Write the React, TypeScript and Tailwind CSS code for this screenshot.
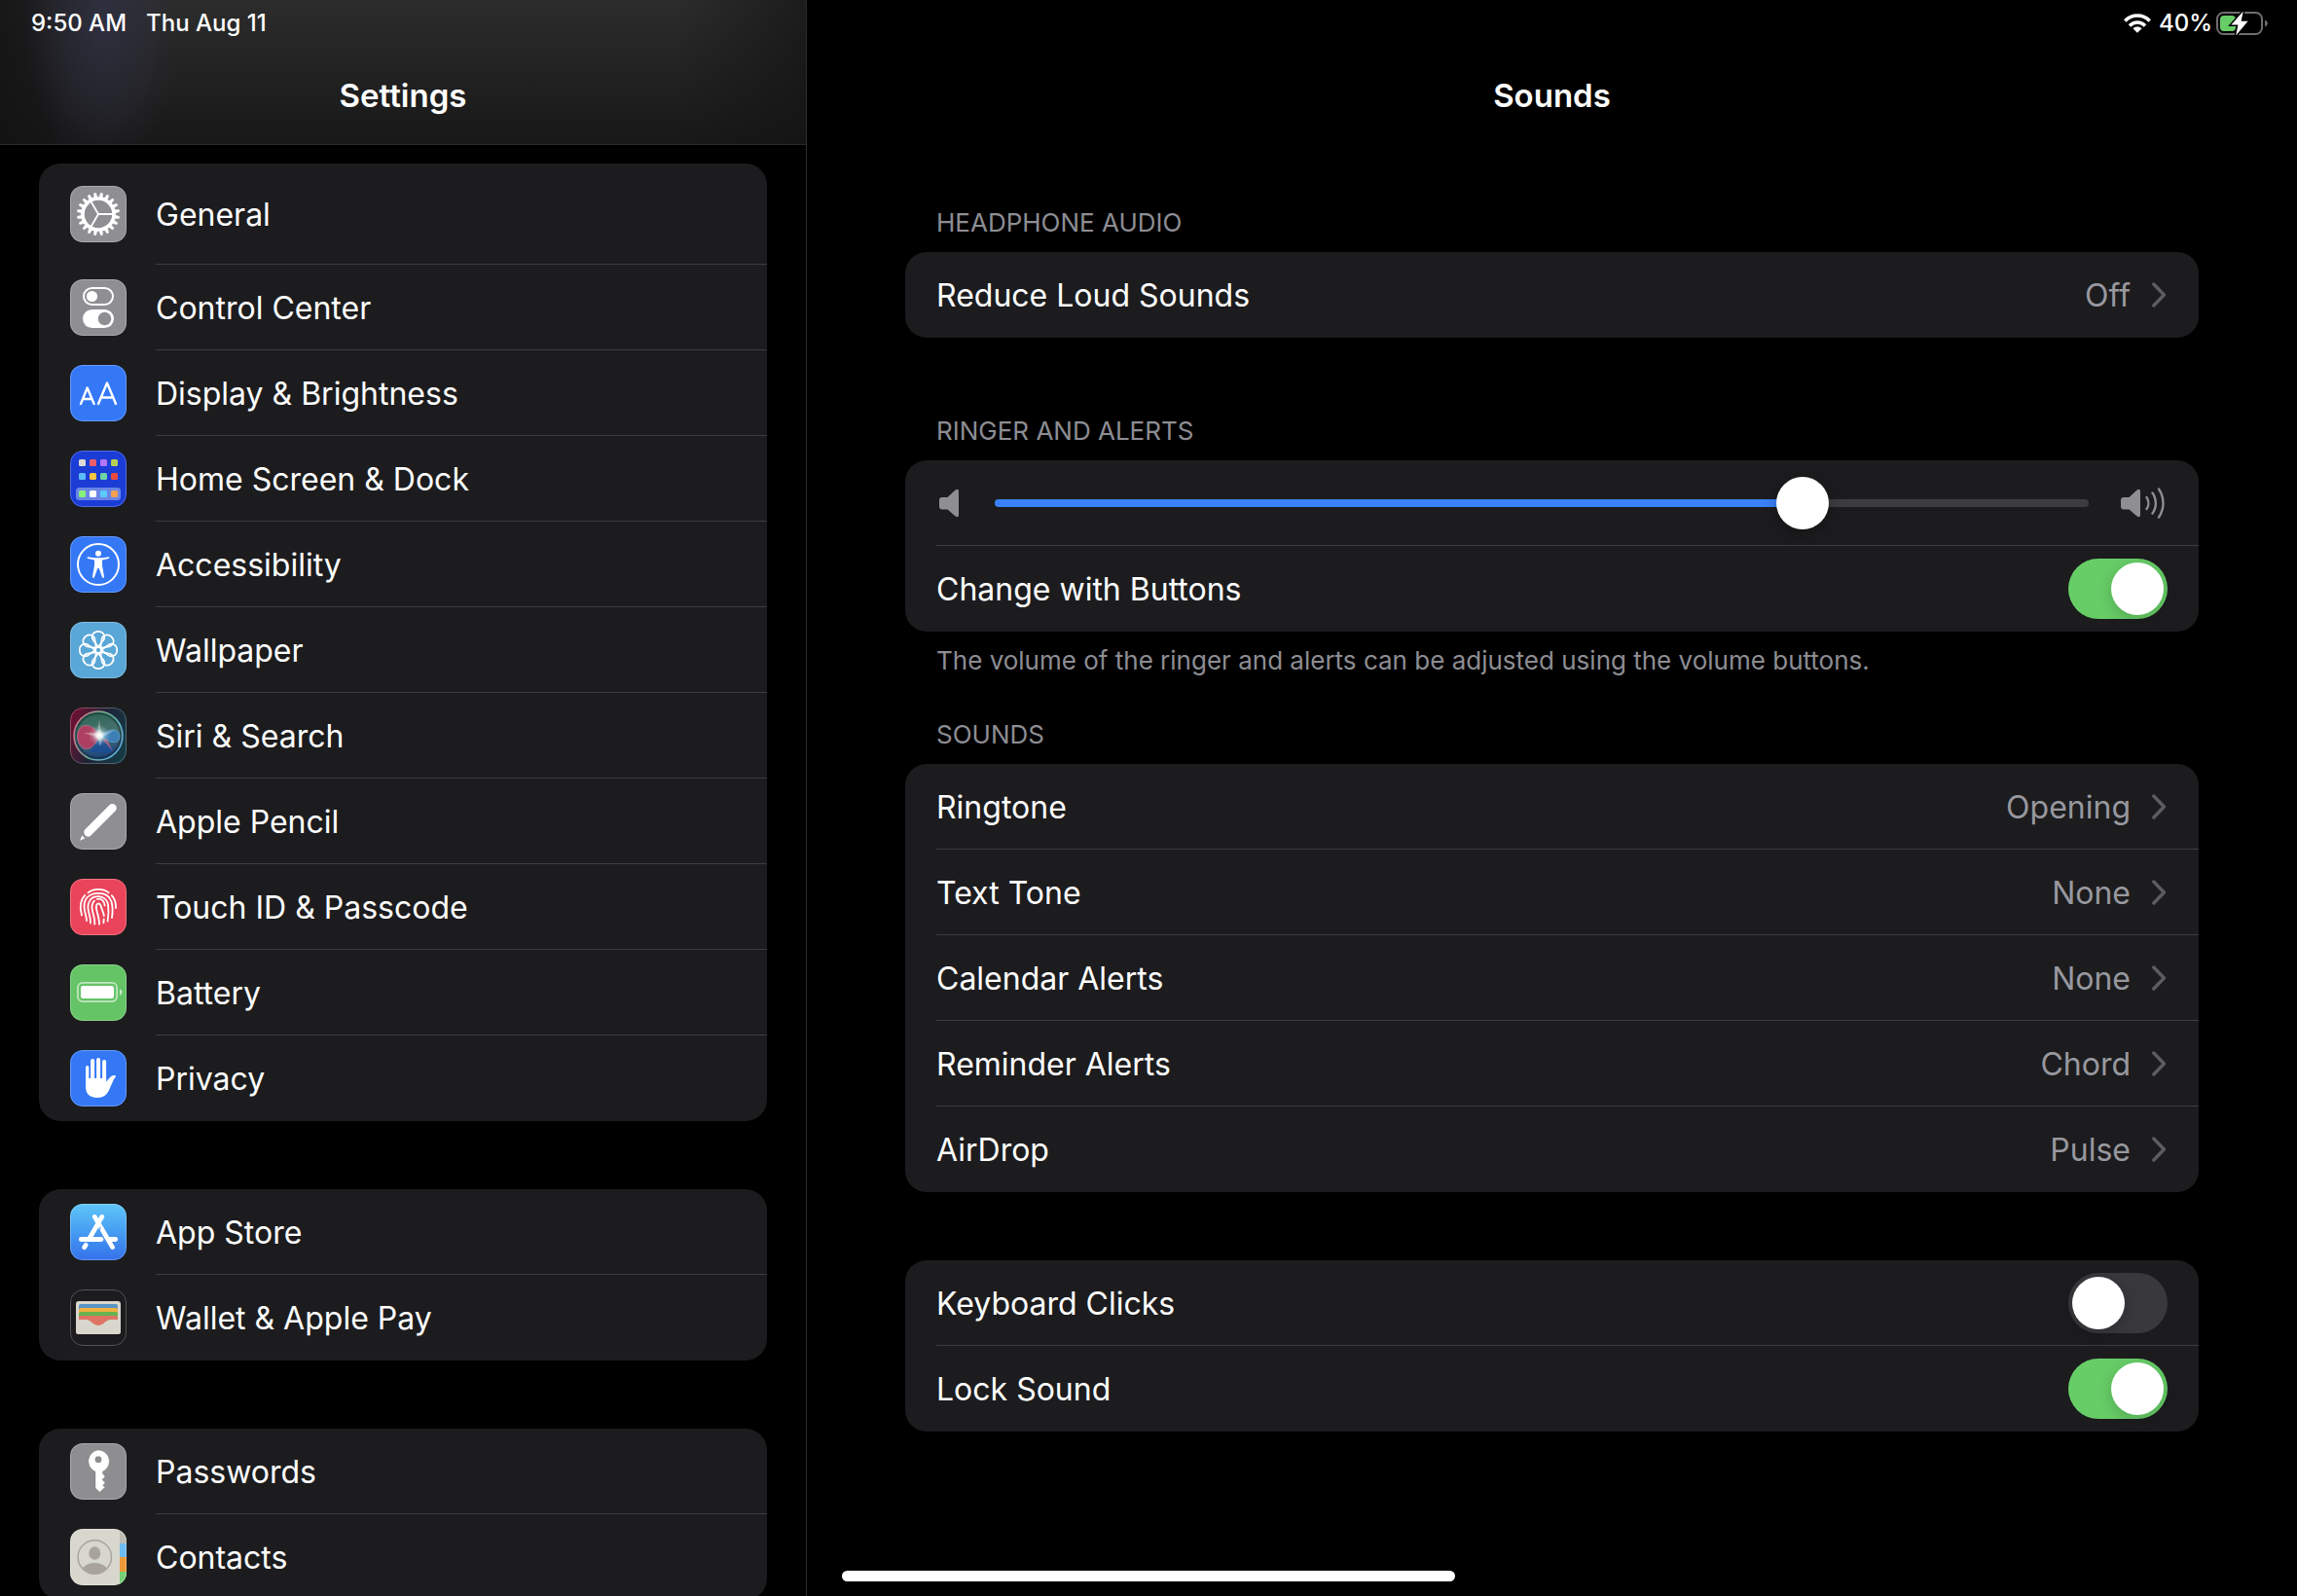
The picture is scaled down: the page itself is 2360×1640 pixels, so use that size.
import React, { useState } from "react";

type IconProps = { children: React.ReactNode; className: string };

// Rounded app tile, every glyph is drawn on a 58x58 grid
const Tile: React.FC<IconProps> = ({ children, className }) => (
  <span
    className={`relative block size-[58px] shrink-0 overflow-hidden rounded-[13px] ${className}`}
  >
    <svg viewBox="0 0 58 58" className="block size-full" aria-hidden="true">
      {children}
      <rect
        x="0.5"
        y="0.5"
        width="57"
        height="57"
        rx="12.5"
        fill="none"
        stroke="#fff"
        strokeOpacity="0.25"
      />
    </svg>
  </span>
);

const GeneralIcon = () => (
  <Tile className="bg-[#8e8e93]">
    <g stroke="#fff" fill="none">
      <circle cx="29" cy="29" r="16" strokeWidth="3.6" />
      <path d="M29 29H45M29 29L21 15.2M29 29L21 42.8" strokeWidth="1.8" />
    </g>
    {Array.from({ length: 20 }, (_, i) => (
      <path
        key={i}
        d="M27 13L28 7.2H30L31 13Z"
        fill="#fff"
        stroke="#fff"
        strokeWidth="0.4"
        transform={`rotate(${i * 18 + 9} 29 29)`}
      />
    ))}
  </Tile>
);

const ControlCenterIcon = () => (
  <Tile className="bg-[#8e8e93]">
    <rect x="14" y="9" width="30" height="17" rx="8.5" fill="none" stroke="#fff" strokeWidth="2" />
    <circle cx="22.5" cy="17.5" r="5.6" fill="#fff" />
    <rect x="13" y="31" width="32" height="19" rx="9.5" fill="#fff" />
    <circle cx="35.5" cy="40.5" r="6.8" fill="#8e8e93" />
  </Tile>
);

const DisplayIcon = () => (
  <Tile className="bg-[#3478f6]">
    <g fill="none" stroke="#fff" strokeWidth="2.4" strokeLinecap="round" strokeLinejoin="round">
      <path d="M11 40L17.7 23.5L24.6 40M13.4 35H22" />
      <path d="M29 40L38 18.5L47 40M32.2 33.5H43.8" />
    </g>
  </Tile>
);

const homeDots = [
  ["#dcdad3", "#ee5d6c", "#b278f8", "#b5d055"],
  ["#5abdf8", "#f8c244", "#6dd5a6", "#ec4a3c"],
  ["#86ef7b", "#ffffff", "#5ccafa", "#f2a053"],
];

const HomeScreenIcon = () => (
  <Tile className="bg-[#1b3dd6]">
    <rect x="6" y="38" width="46" height="13" rx="3.5" fill="#6a85e6" />
    {homeDots.map((row, r) =>
      row.map((color, c) => (
        <rect
          key={`${r}-${c}`}
          x={9 + c * 11}
          y={[9, 23, 41][r]}
          width="7"
          height="7"
          rx="1.5"
          fill={color}
        />
      )),
    )}
  </Tile>
);

const AccessibilityIcon = () => (
  <Tile className="bg-[#3478f6]">
    <circle cx="29" cy="29" r="21" fill="none" stroke="#fff" strokeWidth="2" />
    <circle cx="29" cy="17.8" r="3" fill="#fff" />
    <path
      d="M18.6 21.2C22 22 26 22.3 29 22.3S36 22 39.4 21.2C40.5 21 40.8 22.7 39.7 23L33 24.4V30L35 41.6C35.2 43 33.4 43.3 33 42L29.7 33H28.3L25 42C24.6 43.3 22.8 43 23 41.6L25 30V24.4L18.3 23C17.2 22.7 17.5 21 18.6 21.2Z"
      fill="#fff"
    />
  </Tile>
);

const WallpaperIcon = () => (
  <Tile className="bg-[#59a7d7]">
    <g fill="none" stroke="#fff" strokeWidth="1.7">
      <circle cx="29" cy="29" r="3.2" />
      {Array.from({ length: 8 }, (_, i) => (
        <path
          key={i}
          d="M29 25.8L24.4 19.6C20.6 15.2 23.6 9.8 29 9.8S37.4 15.2 33.6 19.6Z"
          transform={`rotate(${i * 45} 29 29)`}
        />
      ))}
    </g>
  </Tile>
);

const SiriIcon = () => (
  <Tile className="bg-[#16242f]">
    <defs>
      <linearGradient id="siriBg" x1="0" y1="0.3" x2="1" y2="0.7">
        <stop offset="0" stopColor="#6b1230" />
        <stop offset="0.5" stopColor="#1d2438" />
        <stop offset="1" stopColor="#153b46" />
      </linearGradient>
      <linearGradient id="siriRing" x1="0" y1="0.3" x2="1" y2="0.7">
        <stop offset="0" stopColor="#e0708c" />
        <stop offset="0.5" stopColor="#6fb795" />
        <stop offset="1" stopColor="#63b5e8" />
      </linearGradient>
      <linearGradient id="siriOrb" x1="0.4" y1="0" x2="0.6" y2="1">
        <stop offset="0" stopColor="#2b6552" />
        <stop offset="0.45" stopColor="#47716f" />
        <stop offset="1" stopColor="#1b3f7c" />
      </linearGradient>
      <radialGradient id="siriGlow">
        <stop offset="0" stopColor="#fff" />
        <stop offset="0.25" stopColor="#fff" stopOpacity="0.85" />
        <stop offset="0.6" stopColor="#dff" stopOpacity="0.25" />
        <stop offset="1" stopColor="#fff" stopOpacity="0" />
      </radialGradient>
    </defs>
    <rect width="58" height="58" fill="url(#siriBg)" />
    <circle cx="29" cy="29" r="25" fill="url(#siriOrb)" stroke="url(#siriRing)" strokeWidth="1.4" />
    <circle cx="29" cy="29" r="22.8" fill="none" stroke="#10202a" strokeOpacity="0.5" strokeWidth="1.5" />
    <path
      d="M31 30C27 21 20 18 15 18.5C5 20 5 40 16 42.5C23 43 27 35 31 30Z"
      fill="#c8365f"
      fillOpacity="0.8"
      stroke="#f08aa4"
      strokeOpacity="0.6"
      strokeWidth="0.8"
    />
    <path
      d="M31 29C38 22 50 20 51 29S40 38 31 29Z"
      fill="#3d86c6"
      fillOpacity="0.8"
      stroke="#7cc4ea"
      strokeOpacity="0.6"
      strokeWidth="0.8"
    />
    <path d="M19 47C26 44 40 50 45 43L37 35L29 33Z" fill="#174f9e" fillOpacity="0.7" />
    <path d="M33 33L44 45L38 32Z" fill="#d76b86" fillOpacity="0.6" />
    <path d="M30 12L32 27L46 23L34 30L31 40L28.5 31L14 26L28 26Z" fill="#fff" fillOpacity="0.35" />
    <circle cx="30" cy="28.5" r="11" fill="url(#siriGlow)" />
  </Tile>
);

const PencilIcon = () => (
  <Tile className="bg-[#8e8e93]">
    <path
      d="M40.4 12.2C42 10.6 44.6 10.6 46.4 12.2S48.2 16.4 46.6 18.2L21.4 43.4C19.8 45 17.6 45.4 16 43.8S13.6 39 15.2 37.4Z"
      fill="#fff"
    />
    <path d="M10 48.8L12.4 43.4L15.2 46.4Z" fill="#fff" />
  </Tile>
);

const TouchIdIcon = () => (
  <Tile className="bg-[#ea445a]">
    <g fill="none" stroke="#fff" strokeWidth="1.8" strokeLinecap="round">
      <path d="M18.5 14.2C24.5 9.8 33.5 9.8 39.7 14.2" />
      <path d="M12 37.5C10.2 31 9.6 22.5 15.2 16.8" />
      <path d="M42.8 17.2C46 20.5 47.2 25 47 30" />
      <path d="M17 43C17 36 12 30 15.5 22.5C19.5 12.5 38.5 12 42.5 23.5C44 29 43.8 35 43 40" />
      <path d="M21 45.5C21.5 37 16.5 32 19 25C22.5 15 37 16.5 39 26C40 33 39.5 38 38.6 43.5" />
      <path d="M25.3 46.7C26 38 21 32.5 22.8 26.5C23.2 25 24 23.5 25 22.6M27.8 20.8C32.5 19.6 35.3 23.5 35.6 27.5" />
      <path d="M30 46.7C30.3 39 25.8 31.5 27 27.6C28 24.5 31 25 31.7 28C32.4 31 34.7 35 34.8 38" />
      <path d="M34.7 41.5L34.4 45.4" />
    </g>
  </Tile>
);

const BatteryIcon = () => (
  <Tile className="bg-[#65c466]">
    <rect x="7.9" y="18.9" width="40.2" height="19.2" rx="5" fill="none" stroke="#fff" strokeOpacity="0.6" strokeWidth="1.8" />
    <rect x="11" y="22" width="34" height="13" rx="2.2" fill="#fff" />
    <path d="M51 25.2C52.6 25.8 53.6 27 53.6 28.5S52.6 31.2 51 31.8Z" fill="#fff" fillOpacity="0.6" />
  </Tile>
);

const PrivacyIcon = () => (
  <Tile className="bg-[#3478f6]">
    <g stroke="#fff" strokeLinecap="round">
      <path d="M17.7 17.6V34" strokeWidth="3.2" />
      <path d="M23.1 11V32" strokeWidth="4" />
      <path d="M29.1 10V32" strokeWidth="4" />
      <path d="M35.1 12V32" strokeWidth="4" />
    </g>
    <path
      d="M16.1 29H37.1V31.5L37.6 32.2C39 30.6 40.6 28 42.6 26.8C44.4 25.7 46.6 26 47.2 26.9C44.8 29.2 43.8 33.2 41.6 37.4C39.4 43.4 36.6 48.9 28 48.9C19.4 48.9 16.1 44.4 16.1 38Z"
      fill="#fff"
    />
  </Tile>
);

const AppStoreIcon = () => (
  <Tile className="bg-linear-to-b from-[#5fc6f8] to-[#3570ea]">
    <g stroke="#fff" strokeWidth="4.8" strokeLinecap="round" fill="none">
      <path d="M32.7 13.4L19.4 36.4" />
      <path d="M25.3 13.4L43.6 44.6" />
      <path d="M11.3 36.5H32" />
      <path d="M40.6 36.5H46.7" />
      <path d="M16.2 42.2L14.6 44.7" />
    </g>
    <path d="M31.2 23.5L30.4 28L34.2 35" stroke="#4a97f0" strokeWidth="0.9" fill="none" />
  </Tile>
);

const WalletIcon = () => (
  <Tile className="bg-[#1c1c1e]">
    <rect x="6" y="12" width="46" height="34" rx="3" fill="#d9d6cd" />
    <rect x="9" y="15" width="40" height="10" rx="2" fill="#5795c5" />
    <rect x="9" y="19" width="40" height="10" rx="2" fill="#f0b03f" />
    <rect x="9" y="23" width="40" height="10" rx="2" fill="#67b34f" />
    <path
      d="M9 29Q9 27 11 27H47Q49 27 49 29V31H42C35.5 31 36 37 29 37S22.5 31 16 31H9Z"
      fill="#df7464"
    />
    <path
      d="M6 31H16C22.5 31 22 37 29 37S35.5 31 42 31H52V43Q52 46 49 46H9Q6 46 6 43Z"
      fill="#d9d6cd"
    />
  </Tile>
);

const PasswordsIcon = () => (
  <Tile className="bg-[#8e8e90]">
    <path
      fillRule="evenodd"
      d="M29 7A11.6 11.6 0 0 1 33.4 29.2V31L36 34.2L33 37.4L36 40.5L33.6 43.4L36 45L30.4 50.2L26 46V29.2A11.6 11.6 0 0 1 29 7ZM29 13.6A3.2 3.2 0 1 0 29 20A3.2 3.2 0 1 0 29 13.6Z"
      fill="#fff"
      stroke="#707074"
      strokeOpacity="0.5"
      strokeWidth="0.6"
    />
  </Tile>
);

const ContactsIcon = () => (
  <Tile className="bg-[#d7d7cd]">
    <clipPath id="contactClip">
      <circle cx="25.3" cy="29" r="17" />
    </clipPath>
    <circle cx="25.3" cy="29" r="17.2" fill="none" stroke="#a8a39d" strokeWidth="1.4" />
    <g fill="#a8a39d" clipPath="url(#contactClip)">
      <ellipse cx="25.3" cy="25" rx="6" ry="6.8" />
      <ellipse cx="25.3" cy="45" rx="14" ry="10" />
    </g>
    <rect x="51" y="0" width="7" height="15" fill="#bdbcb5" />
    <rect x="51" y="15" width="7" height="14" fill="#6fbdf0" />
    <rect x="51" y="29" width="7" height="15" fill="#ef9a38" />
    <rect x="51" y="44" width="7" height="14" fill="#74d076" />
  </Tile>
);

interface NavItem {
  label: string;
  icon: React.FC;
  tall?: boolean;
}

const navGroups: NavItem[][] = [
  [
    { label: "General", icon: GeneralIcon, tall: true },
    { label: "Control Center", icon: ControlCenterIcon },
    { label: "Display & Brightness", icon: DisplayIcon },
    { label: "Home Screen & Dock", icon: HomeScreenIcon },
    { label: "Accessibility", icon: AccessibilityIcon },
    { label: "Wallpaper", icon: WallpaperIcon },
    { label: "Siri & Search", icon: SiriIcon },
    { label: "Apple Pencil", icon: PencilIcon },
    { label: "Touch ID & Passcode", icon: TouchIdIcon },
    { label: "Battery", icon: BatteryIcon },
    { label: "Privacy", icon: PrivacyIcon },
  ],
  [
    { label: "App Store", icon: AppStoreIcon },
    { label: "Wallet & Apple Pay", icon: WalletIcon },
  ],
  [
    { label: "Passwords", icon: PasswordsIcon },
    { label: "Contacts", icon: ContactsIcon },
  ],
];

const NavGroup: React.FC<{ items: NavItem[] }> = ({ items }) => (
  <ul className="shrink-0 overflow-hidden rounded-[22px] bg-[#1c1c1e]">
    {items.map(({ label, icon: Icon, tall }, index) => (
      <li key={label}>
        <a href="#" className="flex items-center gap-[30px] pl-8">
          <Icon />
          <span
            className={`flex flex-1 items-center pt-0.5 ${tall ? "h-[104px]" : "h-[88px]"} ${
              index < items.length - 1 ? "border-b border-[#3d3d41]" : ""
            }`}
          >
            {label}
          </span>
        </a>
      </li>
    ))}
  </ul>
);

const Chevron = () => (
  <svg viewBox="0 0 16 26" className="h-[26px] w-4" fill="none" aria-hidden="true">
    <path
      d="M1.8 2L12.4 13L1.8 24"
      stroke="#5d5d61"
      strokeWidth="3.4"
      strokeLinecap="round"
      strokeLinejoin="round"
    />
  </svg>
);

const Card: React.FC<{ children: React.ReactNode }> = ({ children }) => (
  <div className="rounded-[22px] bg-[#1c1c1e] pl-8">{children}</div>
);

const rowClass =
  "flex h-[88px] w-full items-center justify-between border-b border-[#3d3d41] pr-8 last:border-b-0";

const LinkRow: React.FC<{ label: string; value: string }> = ({ label, value }) => (
  <button type="button" className={rowClass}>
    <span className="pt-0.5">{label}</span>
    <span className="flex items-center gap-[22px] text-[#98989f]">
      <span className="pt-0.5">{value}</span>
      <Chevron />
    </span>
  </button>
);

const ToggleRow: React.FC<{ label: string; on: boolean }> = ({ label, on }) => {
  const [checked, setChecked] = useState(on);
  return (
    <label className={rowClass}>
      <span className="pt-0.5">{label}</span>
      <input
        type="checkbox"
        role="switch"
        checked={checked}
        onChange={() => setChecked(!checked)}
        className="h-[62px] w-[102px] appearance-none rounded-full bg-[#39393d] p-1 before:block before:size-[54px] before:rounded-full before:bg-white before:shadow-[0_4px_16px_rgba(0,0,0,0.2)] checked:bg-[#67ce67] checked:pl-11"
      />
    </label>
  );
};

const speakerPath =
  "M1 12Q1 9 4 9H9.5L17.6 1.4Q21 -0.6 21 3V27Q21 30.6 17.6 28.6L9.5 21.6H4Q1 21.6 1 18.6Z";

const VolumeRow = () => {
  const [volume, setVolume] = useState(75);
  return (
    <div className={rowClass}>
      <svg viewBox="0 0 24 30" className="h-[30px] w-6 shrink-0" aria-hidden="true">
        <path d={speakerPath} transform="translate(2 0)" fill="#8e8e93" />
      </svg>
      <input
        type="range"
        aria-label="Ringer and alerts volume"
        value={volume}
        onChange={(e) => setVolume(Number(e.target.value))}
        style={{
          backgroundImage: `linear-gradient(to right, #3a82f7 ${volume}%, #3d3d40 ${volume}%)`,
        }}
        className="mr-[33px] ml-9 h-2 min-w-0 flex-1 appearance-none rounded-full [&::-webkit-slider-thumb]:size-[54px] [&::-webkit-slider-thumb]:appearance-none [&::-webkit-slider-thumb]:rounded-full [&::-webkit-slider-thumb]:bg-white [&::-webkit-slider-thumb]:shadow-[0_4px_16px_rgba(0,0,0,0.3)]"
      />
      <svg viewBox="0 0 48 34" className="h-[34px] w-12 shrink-0" aria-hidden="true">
        <path d={speakerPath} transform="translate(-1 2)" fill="#8e8e93" />
        <g fill="none" stroke="#8e8e93" strokeWidth="2.4" strokeLinecap="round">
          <path d="M26.5 11C29 14.5 29 19.5 26.5 23" />
          <path d="M32.5 6.5C37 12.5 37 21.5 32.5 27.5" />
          <path d="M39 2.5C45 11.5 45 22.5 39 31.5" />
        </g>
      </svg>
    </div>
  );
};

const Heading: React.FC<{ children: React.ReactNode }> = ({ children }) => (
  <h2 className="px-8 pb-3.5 text-[26px] leading-8 text-[#8d8d93] uppercase">{children}</h2>
);

const sounds = [
  ["Ringtone", "Opening"],
  ["Text Tone", "None"],
  ["Calendar Alerts", "None"],
  ["Reminder Alerts", "Chord"],
  ["AirDrop", "Pulse"],
];

const StatusIcons = () => (
  <div className="flex h-12 items-center justify-end gap-1 pr-[30px] text-2xl font-medium">
    <svg viewBox="0 0 28 20" className="mr-1 h-5 w-7" aria-label="Wi-Fi">
      <g fill="none" stroke="#fff" strokeWidth="3.6">
        <path d="M1.3 7.4C8.4 0.2 19.6 0.2 26.7 7.4" />
        <path d="M6 12.4C10.6 7.8 17.4 7.8 22 12.4" />
      </g>
      <path d="M14 19.8L9.4 15.2C12 12.9 16 12.9 18.6 15.2Z" fill="#fff" />
    </svg>
    <span>40%</span>
    <svg viewBox="0 0 53 26" className="h-[26px] w-[53px]" aria-label="Charging">
      <rect x="1" y="2" width="46" height="22" rx="6.5" fill="none" stroke="#6e6e70" strokeWidth="2" />
      <rect x="4" y="5" width="16" height="16" rx="4" fill="#67ce67" />
      <path d="M50 9.6C51.8 10.4 52.8 11.6 52.8 13S51.8 15.6 50 16.4Z" fill="#6e6e70" />
      <path
        d="M27.8 0.6L15.4 14.6H22.4L20.2 25.4L32.6 10.8H25.6Z"
        fill="#fff"
        stroke="#000"
        strokeWidth="3"
        paintOrder="stroke"
      />
    </svg>
  </div>
);

export default function App() {
  return (
    <div className="flex h-screen overflow-hidden bg-black font-['Inter','Liberation_Sans',sans-serif] text-[32px] leading-10 text-white">
      <nav
        aria-label="Settings"
        className="flex w-[829px] shrink-0 flex-col border-r border-[#2c2c2e]"
      >
        <header className="h-[149px] shrink-0 border-b border-[#2c2c2e] bg-[radial-gradient(ellipse_80px_160px_at_105px_20px,rgba(48,48,66,0.9),transparent),linear-gradient(to_right,rgba(18,18,20,0.8),transparent_18%,transparent_84%,rgba(18,18,20,0.6)),linear-gradient(to_bottom,#2c2c2c,#181818)]">
          <div className="flex h-12 items-center gap-5 pl-8 text-2xl font-medium">
            <span>9:50 AM</span>
            <span>Thu Aug 11</span>
          </div>
          <h1 className="flex h-[100px] items-center justify-center text-[33px] font-semibold">
            Settings
          </h1>
        </header>
        <div className="flex flex-col gap-[70px] px-10 pt-[19px]">
          {navGroups.map((items) => (
            <NavGroup key={items[0].label} items={items} />
          ))}
        </div>
      </nav>

      <main className="flex min-w-0 flex-1 flex-col">
        <StatusIcons />
        <h1 className="flex h-[100px] items-center justify-center text-[33px] font-semibold">
          Sounds
        </h1>
        <div className="flex flex-col px-[101px] pt-[65px]">
          <section>
            <Heading>Headphone Audio</Heading>
            <Card>
              <LinkRow label="Reduce Loud Sounds" value="Off" />
            </Card>
          </section>

          <section className="pt-20">
            <Heading>Ringer and Alerts</Heading>
            <Card>
              <VolumeRow />
              <ToggleRow label="Change with Buttons" on />
            </Card>
            <p className="px-8 pt-3.5 text-[26px] leading-8 text-[#8d8d93]">
              The volume of the ringer and alerts can be adjusted using the volume buttons.
            </p>
          </section>

          <section className="pt-11">
            <Heading>Sounds</Heading>
            <Card>
              {sounds.map(([label, value]) => (
                <LinkRow key={label} label={label} value={value} />
              ))}
            </Card>
          </section>

          <section className="pt-[70px]">
            <Card>
              <ToggleRow label="Keyboard Clicks" on={false} />
              <ToggleRow label="Lock Sound" on />
            </Card>
          </section>
        </div>
      </main>

      <div className="fixed inset-x-0 bottom-[15px] mx-auto h-[11px] w-[630px] rounded-full bg-white" />
    </div>
  );
}
